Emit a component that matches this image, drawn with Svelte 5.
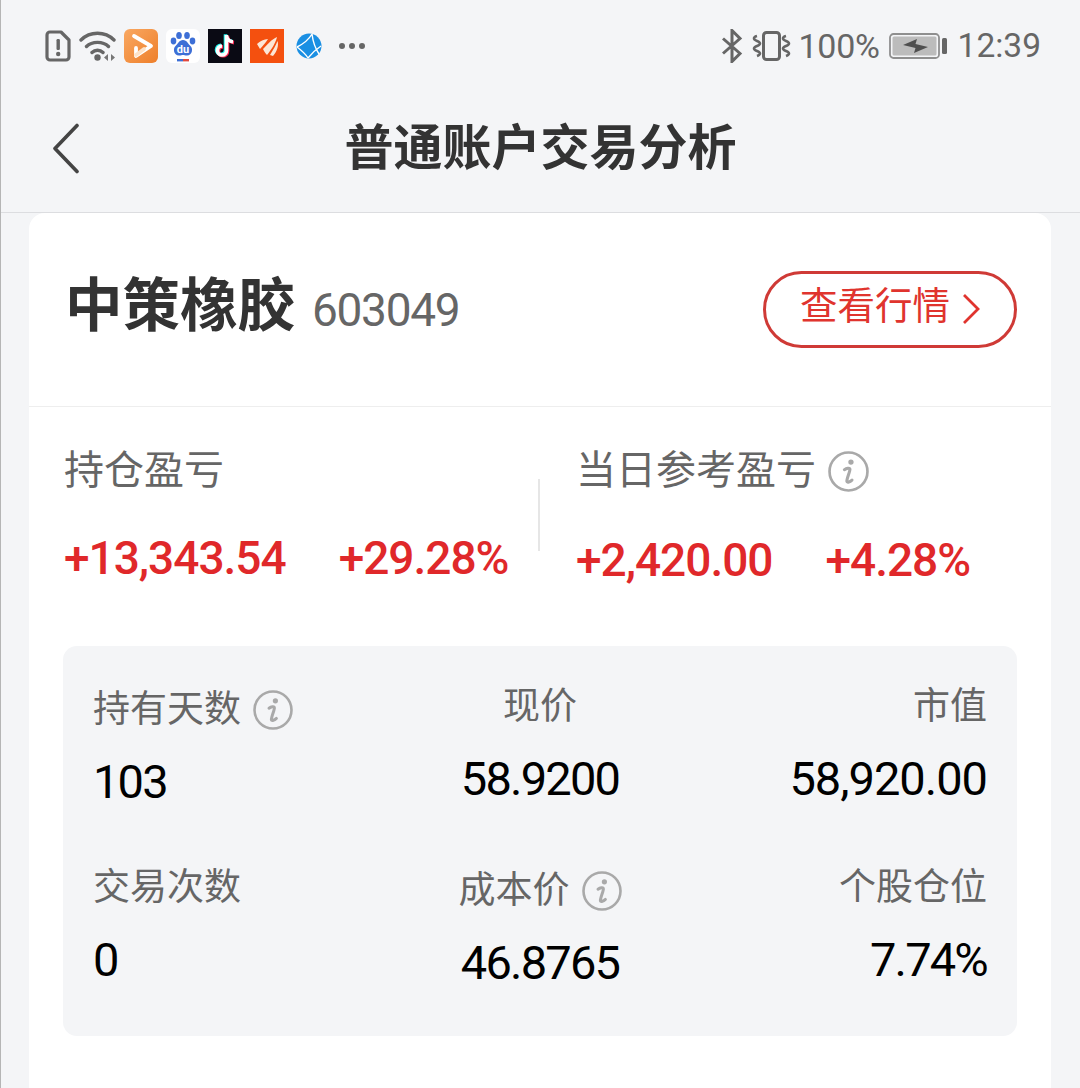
<script>
  const stats = [
    { label: '持有天数', value: '103', info: true, align: 'left' },
    { label: '现价', value: '58.9200', align: 'center' },
    { label: '市值', value: '58,920.00', align: 'right' },
    { label: '交易次数', value: '0', align: 'left' },
    { label: '成本价', value: '46.8765', info: true, align: 'center' },
    { label: '个股仓位', value: '7.74%', align: 'right' }
  ];
</script>

{#snippet infoIcon()}
  <svg class="info" viewBox="0 0 40 40" aria-hidden="true">
    <circle cx="20" cy="20" r="18.5" fill="none" stroke="#a9a9a9" stroke-width="2.6" />
    <circle cx="22.4" cy="10.8" r="2.6" fill="#a9a9a9" />
    <path d="M16 18.2c2-1.4 5.2-2.2 5.4-.4.2 1.800-3.300 9.800-3 11.800.3 1.600 3 .6 5-1.200" fill="none" stroke="#a9a9a9" stroke-width="3" stroke-linecap="round" />
  </svg>
{/snippet}

<div class="page">
  <div class="statusbar">
    <div class="left">
      <svg class="ic-sim" viewBox="0 0 26 32"><path d="M5 2h11l8 8v17a3 3 0 0 1-3 3H5a3 3 0 0 1-3-3V5a3 3 0 0 1 3-3z" fill="none" stroke="#666" stroke-width="3.2" stroke-linejoin="round" /><rect x="11.500" y="9" width="3.400" height="11" rx="1.200" fill="#666" /><circle cx="13.200" cy="24" r="2.200" fill="#666" /></svg>
      <svg class="ic-wifi" viewBox="0 0 38 32">
        <path d="M2 10C11 1 26 1 35 10M7.500 16.500C13 11 24 11 29.500 16.500M13 22.500c3-3 8-3 11 0" fill="none" stroke="#666" stroke-width="3.400" stroke-linecap="round" />
        <circle cx="18.500" cy="27.500" r="3.200" fill="#666" />
        <path d="M29 24v7l-4-3.500zM32 24v7l4-3.500z" fill="#777" />
      </svg>
      <svg class="app app-first" viewBox="0 0 34 34">
        <defs><linearGradient id="og" x1="0" y1="0" x2="1" y2="1"><stop offset="0" stop-color="#f9a862" /><stop offset="1" stop-color="#ee7f2a" /></linearGradient></defs>
        <rect width="34" height="34" rx="6" fill="url(#og)" />
        <path d="M10 7l17 10-15 10v-8" fill="none" stroke="#fff" stroke-width="3.800" stroke-linejoin="round" stroke-linecap="round" />
        <path d="M12 26l8-6" stroke="#fde3c9" stroke-width="3.600" stroke-linecap="round" />
      </svg>
      <svg class="app" viewBox="0 0 34 34">
        <rect width="34" height="34" rx="6" fill="#fff" />
        <g fill="#3d6fd6">
          <ellipse cx="7.500" cy="12" rx="2.800" ry="3.400" />
          <ellipse cx="13" cy="6.500" rx="2.800" ry="3.600" />
          <ellipse cx="21" cy="6.500" rx="2.800" ry="3.600" />
          <ellipse cx="26.500" cy="12" rx="2.800" ry="3.400" />
          <path d="M17 11c4 0 5 4 7 5.500 3.500 2.500 2.500 10-3 10-2 0-3-.6-4-.6s-2 .6-4 .6c-5.500 0-6.500-7.500-3-10 2-1.500 3-5.500 7-5.500z" />
        </g>
        <text x="17" y="24" text-anchor="middle" class="du">du</text>
        <rect x="11" y="30" width="6" height="2.400" fill="#3d6fd6" /><rect x="17" y="30" width="6" height="2.400" fill="#e0483e" />
      </svg>
      <svg class="app" viewBox="0 0 34 34">
        <rect width="34" height="34" fill="#0a0a14" />
        <g fill="none" stroke-width="3.600">
          <path d="M18.500 6v15.500a4.500 4.500 0 1 1-4.500-4.500M18.500 7c.6 3.500 3 5.500 6.500 5.800" stroke="#25f4ee" transform="translate(-1 -.8)" />
          <path d="M18.500 6v15.500a4.500 4.500 0 1 1-4.500-4.500M18.500 7c.6 3.500 3 5.500 6.500 5.800" stroke="#fe2c55" transform="translate(1 .8)" />
          <path d="M18.500 6v15.500a4.500 4.500 0 1 1-4.500-4.500M18.500 7c.6 3.500 3 5.500 6.500 5.800" stroke="#fff" />
        </g>
      </svg>
      <svg class="app" viewBox="0 0 34 34">
        <rect width="34" height="34" fill="#f4500f" />
        <g fill="#fce6d6">
          <path d="M7 15c3-3 7-4.500 11-5-2 3-5 7-8 10z" />
          <path d="M13 20c4-4 9-10 14-12-1 5-5 12-10 18-2-2-3-4-4-6z" />
          <path d="M20 26c3-5 6-10 7.500-14 1.500 4-.5 11-4.500 15z" />
        </g>
      </svg>
      <svg class="ic-globe" viewBox="0 0 26 26">
        <circle cx="13" cy="13" r="12.500" fill="#1a8fe3" />
        <path d="M1 14C7 11 12 8 16 1M16 1c1 8 3 14 7 20M1 14c4 3 8 6 11 11M12 25c4-5 7-8 13-12" fill="none" stroke="#fff" stroke-width="1.400" />
      </svg>
      <span class="dots"><i></i><i></i><i></i></span>
    </div>
    <div class="right">
      <svg class="ic-bt" viewBox="0 0 22 34"><path d="M2 9.500l17 15-8 8V1.500l8 8-17 15" fill="none" stroke="#666" stroke-width="3" /></svg>
      <svg class="ic-vib" viewBox="0 0 41 30">
        <rect x="12.500" y="1.500" width="16" height="27" rx="3" fill="none" stroke="#666" stroke-width="3" />
        <path d="M6 5c-4 1-4 3.500 0 5 4 1.500 4 3.500 0 5-4 1.500-4 3.500 0 5 4 1.500 4 3.500 0 5M35 5c-4 1-4 3.500 0 5 4 1.500 4 3.500 0 5-4 1.500-4 3.500 0 5 4 1.500 4 3.500 0 5" fill="none" stroke="#666" stroke-width="2.600" />
      </svg>
      <span class="pct">100%</span>
      <svg class="ic-batt" viewBox="0 0 58 26">
        <rect x="1" y="1" width="49" height="24" rx="3.500" fill="none" stroke="#8f8f8f" stroke-width="1.800" />
        <rect x="3.500" y="3.500" width="44" height="19" rx="1.500" fill="#bcbcbc" />
        <path d="M14 12l14-6-1.500 5L39 14l-14 6 1.500-5z" fill="#4f4f4f" />
        <rect x="53" y="5" width="5" height="16" rx="1.500" fill="#666" />
      </svg>
      <span class="clock">12:39</span>
    </div>
  </div>

  <header class="nav">
    <svg class="back" viewBox="0 0 28 52"><path d="M25 2.500L3 25.500l22 23" fill="none" stroke="#444" stroke-width="3.600" stroke-linecap="round" stroke-linejoin="round" /></svg>
    <h1>普通账户交易分析</h1>
  </header>

  <main class="card">
    <div class="card-head">
      <div class="name"><strong>中策橡胶</strong><span class="code">603049</span></div>
      <button class="quote"><span>查看行情</span>
        <svg viewBox="0 0 18 32"><path d="M2 2l14 14L2 30" fill="none" stroke="#e0342e" stroke-width="2.800" /></svg>
      </button>
    </div>

    <div class="pnl">
      <div class="pnl-col">
        <div class="pnl-label">持仓盈亏</div>
        <div class="pnl-nums first"><span>+13,343.54</span><span>+29.28%</span></div>
      </div>
      <div class="pnl-sep"></div>
      <div class="pnl-col">
        <div class="pnl-label">当日参考盈亏 {@render infoIcon()}</div>
        <div class="pnl-nums second"><span>+2,420.00</span><span>+4.28%</span></div>
      </div>
    </div>

    <div class="panel">
      {#each stats as s}
        <div class="cell {s.align}" class:has-info={s.info}>
          <div class="cell-label">{s.label}{#if s.info}{@render infoIcon()}{/if}</div>
          <div class="cell-value" class:grouped={s.value.includes(',')}>{s.value}</div>
        </div>
      {/each}
    </div>
  </main>
</div>

<style>
  :global(body) {
    margin: 0;
    background: #f4f5f7;
  }

  .page {
    height: 1088px;
    overflow: hidden;
    box-sizing: border-box;
    border-left: 1px solid #b5b5b5;
    background: #f4f5f7;
    font-family: Roboto, "Noto Sans CJK SC", sans-serif;
  }

  /* status bar */
  .statusbar {
    height: 90px;
    box-sizing: border-box;
    display: flex;
    justify-content: space-between;
    align-items: center;
    padding: 1px 39px 0 44px;
    color: #666;
  }

  .left, .right {
    display: flex;
    align-items: center;
  }

  .ic-sim { width: 26px; height: 32px; }
  .ic-wifi { width: 38px; height: 32px; margin-left: 8px; }
  .app { width: 34px; height: 34px; margin-left: 8px; }
  .app-first { margin-left: 7px; }
  .ic-globe { width: 26px; height: 26px; margin-left: 12px; }

  .du {
    font-family: Roboto, sans-serif;
    font-size: 11px;
    font-weight: 700;
    fill: #fff;
  }

  .dots {
    display: flex;
    gap: 4px;
    margin-left: 17px;
  }

  .dots i {
    width: 6px;
    height: 6px;
    border-radius: 50%;
    background: #666;
  }

  .ic-bt { width: 22px; height: 34px; }
  .ic-vib { width: 41px; height: 30px; margin-left: 8px; }
  .pct { font-size: 34px; margin-left: 7px; letter-spacing: -0.3px; line-height: 40px; padding-top: 1px; }
  .ic-batt { width: 58px; height: 26px; margin-left: 9px; }
  .clock { font-size: 33.500px; margin-left: 11px; line-height: 40px; padding-top: 1px; }

  /* nav */
  .nav {
    position: relative;
    height: 123px;
    box-sizing: border-box;
    border-bottom: 1px solid #dcdde0;
    display: flex;
    align-items: center;
    justify-content: center;
  }

  .back {
    position: absolute;
    left: 51px;
    top: 33px;
    width: 28px;
    height: 52px;
  }

  h1 {
    margin: 0 0 6px;
    font-size: 49px;
    font-weight: 700;
    color: #333;
    line-height: 1;
  }

  /* card */
  .card {
    margin: 0 28px;
    width: 1022px;
    height: 900px;
    background: #fff;
    border-radius: 16px 16px 0 0;
  }

  .card-head {
    height: 194px;
    box-sizing: border-box;
    border-bottom: 1px solid #eeeeee;
    display: flex;
    align-items: center;
    justify-content: space-between;
    padding: 0 34px 0 36px;
  }

  .name {
    display: flex;
    align-items: baseline;
    gap: 17px;
    margin-bottom: 4px;
  }

  .name strong {
    font-size: 57.500px;
    font-weight: 700;
    color: #333;
    line-height: 1;
  }

  .code {
    font-size: 46px;
    color: #666;
    letter-spacing: -1.300px;
  }

  .quote {
    width: 254px;
    height: 77px;
    box-sizing: border-box;
    border: 3px solid #cf3a36;
    border-radius: 39px;
    background: #fff;
    color: #e0342e;
    font: inherit;
    font-size: 37.500px;
    display: flex;
    align-items: center;
    justify-content: center;
    gap: 12px;
    padding: 0;
  }

  .quote span { margin-bottom: 7px; line-height: 46px; }
  .quote svg { width: 18px; height: 32px; margin-bottom: 2px; }

  /* pnl */
  .pnl {
    display: flex;
    align-items: flex-start;
    padding: 40px 0 0 35px;
    height: 239px;
    box-sizing: border-box;
  }

  .pnl-col { display: flex; flex-direction: column; }

  .pnl-label {
    display: flex;
    align-items: center;
    gap: 12px;
    font-size: 40px;
    color: #666;
    line-height: 48px;
    height: 48px;
  }

  .pnl-label .info { width: 41px; height: 41px; }

  .pnl-nums {
    display: flex;
    color: #e0282a;
    font-size: 46px;
    font-weight: 500;
    margin-top: 36px;
    line-height: 54px;
    letter-spacing: -1px;
  }

  .pnl-nums.first { gap: 53px; width: 444px; }
  .pnl-nums.second { gap: 53px; margin-top: 38px; }

  .pnl-sep {
    width: 2px;
    height: 72px;
    background: #e6e6e6;
    margin: 32px 36px 0 30px;
  }

  /* panel */
  .panel {
    margin: 0 34px;
    height: 390px;
    box-sizing: border-box;
    background: #f4f5f7;
    border-radius: 14px;
    padding: 38px 30px 0;
    display: grid;
    grid-template-columns: 1fr 1fr 1fr;
    grid-auto-rows: 181px;
  }

  .cell { display: flex; flex-direction: column; }
  .cell.left { align-items: flex-start; }
  .cell.center { align-items: center; }
  .cell.right { align-items: flex-end; }
  .cell.has-info { padding-top: 3px; }

  .cell-label {
    display: flex;
    align-items: center;
    gap: 12px;
    font-size: 37px;
    color: #666;
    line-height: 46px;
    height: 46px;
  }

  .cell-label .info { width: 40px; height: 40px; }

  .cell-value {
    font-size: 47px;
    font-weight: 450;
    color: #000;
    line-height: 54px;
    margin-top: 22px;
    letter-spacing: -1.800px;
  }

  .cell-value.grouped { letter-spacing: -1px; }
</style>
